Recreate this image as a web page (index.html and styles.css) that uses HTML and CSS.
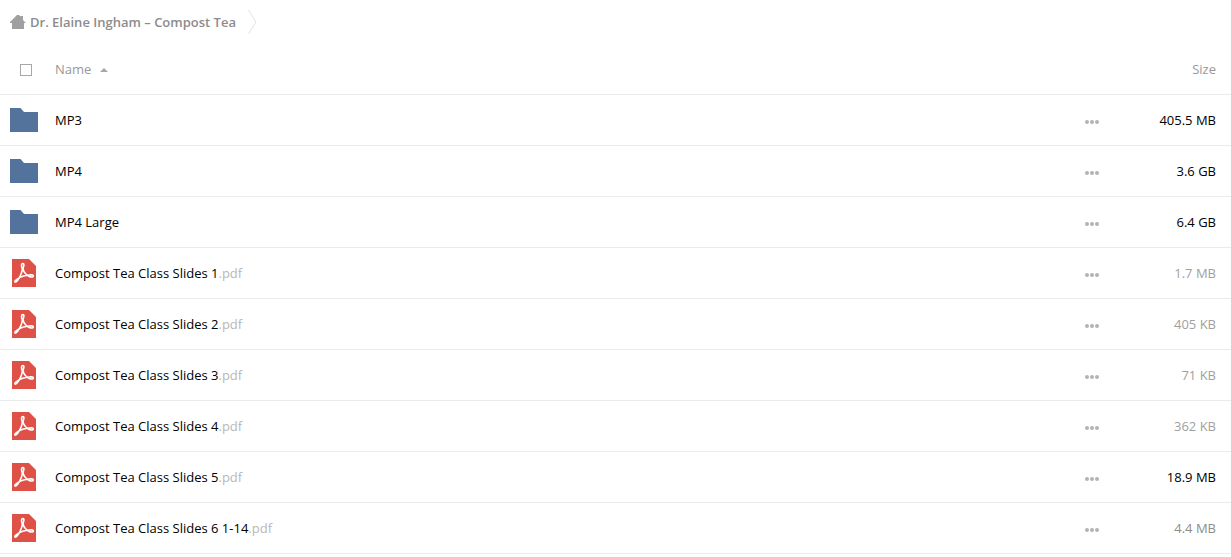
FILE: index.html
```
<!DOCTYPE html>
<html lang="en">
<head>
  <meta charset="UTF-8">
  <meta name="viewport" content="width=device-width, initial-scale=1.0">
  <link rel="stylesheet" href="styles.css">
  <title>Dr. Elaine Ingham – Compost Tea</title>
</head>
<body>
  <svg class="sprite" aria-hidden="true">
    <symbol id="folder" viewBox="0 0 28 24">
      <path d="M0 0h10.500l3.500 4h14v20H0z" fill="#54739c"/>
    </symbol>
    <symbol id="pdf" viewBox="0 0 24 28">
      <path d="M0 0h17l7 7v21H0z" fill="#df5047"/>
      <path d="M10.900 4.500C9.200 4.500 9.300 7 10.100 9.200C10.700 11.500 9.300 15 7.400 18.600C5 20 2.600 21.400 2.700 22.600C3 24 5 22.700 7.400 18.600C10 17.400 13.500 16.500 15.600 16.300C18.300 18.600 21.400 18.400 21.400 17.100C21.300 15.600 18.300 15.700 15.600 16.300C13 14.600 11.300 12 11.100 9.200C12 7 12.400 4.500 10.900 4.500Z" fill="none" stroke="#fff" stroke-width="1.600" stroke-linejoin="round"/>
    </symbol>
    <symbol id="dots" viewBox="0 0 14 4">
      <g fill="#b3b3b3"><circle cx="2" cy="2" r="2"/><circle cx="7" cy="2" r="2"/><circle cx="12" cy="2" r="2"/></g>
    </symbol>
  </svg>

  <nav class="breadcrumb">
    <a href="#" class="crumb">
      <svg class="home" viewBox="0 0 16 14"><path d="M7 0h2l1.500 1.500V1h2.500v4l3 3h-2v6H2V8H0V7z" fill="#a0a0a0"/></svg>
      <span>Dr. Elaine Ingham – Compost Tea</span>
    </a>
    <svg class="separator" viewBox="0 0 9 26"><path d="M.5 1l7.500 12l-7.500 12" fill="none" stroke="#e2e2e2"/></svg>
  </nav>

  <table class="files">
    <thead>
      <tr>
        <th class="icon"><input type="checkbox" class="check" aria-label="Select all"></th>
        <th class="name">
          <button type="button" class="sort">Name
            <svg class="arrow" viewBox="0 0 8 4"><path d="M0 4l4-4l4 4z" fill="#a8a8a8"/></svg>
          </button>
        </th>
        <th class="actions"></th>
        <th class="size"><button type="button" class="sort">Size</button></th>
      </tr>
    </thead>
    <tbody>
      <tr>
        <td class="icon"><svg class="folder"><use href="#folder"/></svg></td>
        <td class="name"><a href="#">MP3</a></td>
        <td class="actions"><button type="button" class="more" aria-label="More"><svg class="dots"><use href="#dots"/></svg></button></td>
        <td class="size">405.5 MB</td>
      </tr>
      <tr>
        <td class="icon"><svg class="folder"><use href="#folder"/></svg></td>
        <td class="name"><a href="#">MP4</a></td>
        <td class="actions"><button type="button" class="more" aria-label="More"><svg class="dots"><use href="#dots"/></svg></button></td>
        <td class="size">3.6 GB</td>
      </tr>
      <tr>
        <td class="icon"><svg class="folder"><use href="#folder"/></svg></td>
        <td class="name"><a href="#">MP4 Large</a></td>
        <td class="actions"><button type="button" class="more" aria-label="More"><svg class="dots"><use href="#dots"/></svg></button></td>
        <td class="size">6.4 GB</td>
      </tr>
      <tr>
        <td class="icon"><svg class="pdf"><use href="#pdf"/></svg></td>
        <td class="name"><a href="#">Compost Tea Class Slides 1<span class="ext">.pdf</span></a></td>
        <td class="actions"><button type="button" class="more" aria-label="More"><svg class="dots"><use href="#dots"/></svg></button></td>
        <td class="size small">1.7 MB</td>
      </tr>
      <tr>
        <td class="icon"><svg class="pdf"><use href="#pdf"/></svg></td>
        <td class="name"><a href="#">Compost Tea Class Slides 2<span class="ext">.pdf</span></a></td>
        <td class="actions"><button type="button" class="more" aria-label="More"><svg class="dots"><use href="#dots"/></svg></button></td>
        <td class="size small">405 KB</td>
      </tr>
      <tr>
        <td class="icon"><svg class="pdf"><use href="#pdf"/></svg></td>
        <td class="name"><a href="#">Compost Tea Class Slides 3<span class="ext">.pdf</span></a></td>
        <td class="actions"><button type="button" class="more" aria-label="More"><svg class="dots"><use href="#dots"/></svg></button></td>
        <td class="size small">71 KB</td>
      </tr>
      <tr>
        <td class="icon"><svg class="pdf"><use href="#pdf"/></svg></td>
        <td class="name"><a href="#">Compost Tea Class Slides 4<span class="ext">.pdf</span></a></td>
        <td class="actions"><button type="button" class="more" aria-label="More"><svg class="dots"><use href="#dots"/></svg></button></td>
        <td class="size small">362 KB</td>
      </tr>
      <tr>
        <td class="icon"><svg class="pdf"><use href="#pdf"/></svg></td>
        <td class="name"><a href="#">Compost Tea Class Slides 5<span class="ext">.pdf</span></a></td>
        <td class="actions"><button type="button" class="more" aria-label="More"><svg class="dots"><use href="#dots"/></svg></button></td>
        <td class="size">18.9 MB</td>
      </tr>
      <tr>
        <td class="icon"><svg class="pdf"><use href="#pdf"/></svg></td>
        <td class="name"><a href="#">Compost Tea Class Slides 6 1-14<span class="ext">.pdf</span></a></td>
        <td class="actions"><button type="button" class="more" aria-label="More"><svg class="dots"><use href="#dots"/></svg></button></td>
        <td class="size medium">4.4 MB</td>
      </tr>
    </tbody>
  </table>
</body>
</html>
```
FILE: styles.css
```
* {
  box-sizing: border-box;
}

body {
  margin: 0;
  background-color: #fff;
  color: #000;
  font-family: "Open Sans", sans-serif;
  font-size: 13px;
  line-height: 18px;
}

a {
  color: inherit;
  text-decoration: none;
}

svg {
  display: block;
}

.sprite {
  display: none;
}

/* breadcrumb */
.breadcrumb {
  display: flex;
  align-items: center;
  gap: 12px;
  height: 44px;
  padding: 0 10px;
}

.crumb {
  display: flex;
  align-items: center;
  gap: 4px;
  color: #8c8c8c;
  font-weight: 600;
}

.home {
  width: 16px;
  height: 14px;
}

.separator {
  width: 9px;
  height: 26px;
}

/* file list */
.files {
  width: 100%;
  border-collapse: separate;
  border-spacing: 0;
  table-layout: fixed;
}

.files th,
.files td {
  height: 51px;
  padding: 0;
  border-bottom: 1px solid #ebebeb;
  font-weight: 400;
  text-align: left;
  vertical-align: middle;
}

.files .icon {
  width: 55px;
}

.files .actions {
  width: 32px;
}

.files .size {
  width: 114px;
  padding-right: 15px;
  text-align: right;
}

.files .small {
  color: #a0a0a0;
}

.files .medium {
  color: #8c8c8c;
}

.ext {
  color: #b8b8b8;
}

.folder {
  width: 28px;
  height: 24px;
  margin-left: 10px;
}

.pdf {
  width: 24px;
  height: 28px;
  margin-left: 12px;
}

.check {
  appearance: none;
  display: block;
  width: 12px;
  height: 12px;
  margin: 2px 0 0 20px;
  border: 1px solid #a8a8a8;
  background-color: #fff;
}

.check:checked {
  background-color: #54739c;
}

.sort {
  display: inline-flex;
  align-items: center;
  gap: 9px;
  padding: 0;
  border: 0;
  background: none;
  color: #999;
  font: inherit;
  cursor: pointer;
}

.arrow {
  width: 8px;
  height: 4px;
  margin-top: 2px;
}

.more {
  display: block;
  padding: 4px 0 0;
  border: 0;
  background: none;
  cursor: pointer;
}

.dots {
  width: 14px;
  height: 4px;
}
```
